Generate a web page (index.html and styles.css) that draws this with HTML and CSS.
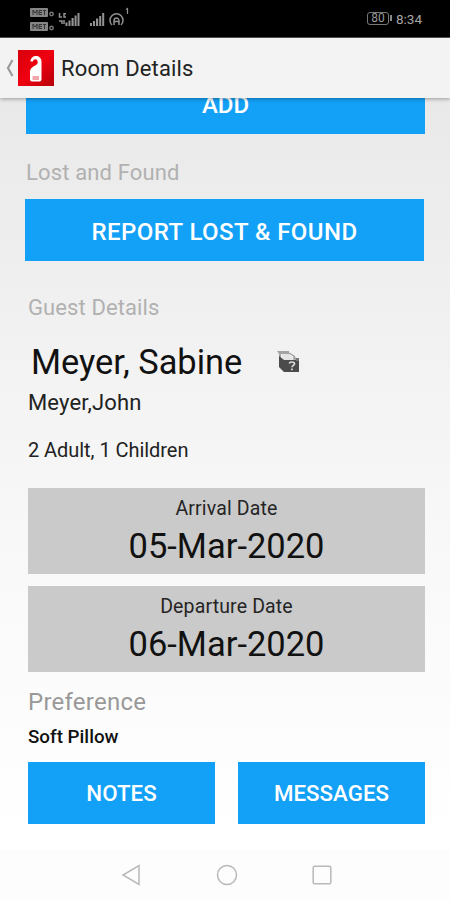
FILE: index.html
```html
<!DOCTYPE html>
<html lang="en">
<head>
<meta charset="utf-8">
<title>Room Details</title>
<link rel="stylesheet" href="styles.css">
</head>
<body>
<div class="screen">
  <div class="status">
    <svg class="signals" width="105" height="38" viewBox="0 0 105 38">
      <g fill="#858585">
        <rect x="0" y="8" width="18" height="9" rx="1"/>
        <rect x="0" y="22" width="18" height="9" rx="1"/>
      </g>
      <g fill="none" stroke="#333" stroke-width="1">
        <path d="M3 15v-5l2 3 2-3v5M12 10.500H9v4h3M9 12.500h3M13 10.500h3M14.500 10.500v4.500"/>
        <path d="M3 29v-5l2 3 2-3v5M12 24.500H9v4h3M9 26.500h3M13 24.500h3M14.500 24.500v4.500"/>
      </g>
      <g fill="none" stroke="#777" stroke-width="1.500">
        <circle cx="21.500" cy="14" r="1.700"/>
        <circle cx="21.500" cy="28" r="1.700"/>
        <path d="M29.500 13v4h2.500M36 13.700h-2v3.300h2M29 21h3v3M34 20v4" stroke="#909090"/>
      </g>
      <g fill="#929292">
        <path d="M35.500 22.500h2v3.500h-2zM38.500 20.500h2v5.500h-2zM41.500 18h2.200v8h-2.200zM44.600 15.500h2v10.500h-2zM47.500 13h2v13h-2z"/>
        <path d="M60 23h2v3h-2zM63 21h2v5h-2zM66 18.500h2.200v7.500h-2.200zM69.200 16h2v10h-2zM72.200 13h2v13h-2z"/>
      </g>
      <g fill="none" stroke="#909090" stroke-width="1.500">
        <path d="M82 25a6.500 6.500 0 1 1 9 0"/>
        <path d="M84 25v-4a2.500 3 0 0 1 5 0v4M84 21.500h5"/>
        <path d="M96 9.500l1.500-1V14" stroke-width="1.200"/>
      </g>
    </svg>
    <div class="battery">80</div>
    <div class="clock">8:34</div>
  </div>
  <header class="bar">
    <svg class="back" width="8" height="20" viewBox="0 0 8 20"><path d="M6.500 2 2 10l4.500 8" fill="none" stroke="#9b9b9b" stroke-width="2.200"/></svg>
    <svg class="logo" width="36" height="36" viewBox="0 0 36 36">
      <defs><linearGradient id="red" x1="0" y1="0" x2="1" y2="1"><stop offset="0" stop-color="#d8000b"/><stop offset=".5" stop-color="#ef0010"/><stop offset="1" stop-color="#b6000a"/></linearGradient></defs>
      <rect width="36" height="36" fill="url(#red)"/>
      <path d="M12.500 11.500C12.500 4 23.500 4 23.500 11.500V29.500q0 2-2 2h-7.500q-2 0-2-2V21q0-2.500 3-4.200c3.500-1.500 5-3 4.700-5-.5-3.300-4.400-3.300-4.700-.3z" fill="#fff"/>
      <path d="M14.500 27h6.500M14.500 29h6.500" stroke="#e05058" stroke-width="1.200"/>
    </svg>
    <h1 class="title">Room Details</h1>
  </header>
  <main class="content">
    <button class="btn add">ADD</button>
    <h2 class="label lost">Lost and Found</h2>
    <button class="btn report">REPORT LOST &amp; FOUND</button>
    <h2 class="label guest">Guest Details</h2>
    <div class="name-row">
      <span class="name">Meyer, Sabine</span>
      <svg width="23" height="22" viewBox="0 0 23 22">
        <path d="M0 0h12v3H4v5H2V3z" fill="#a4a4a4"/>
        <path d="M5 3h7l5 6H5z" fill="#e4e4e4"/>
        <path d="M12 2l5 3v4M17 5l2 4" fill="none" stroke="#999" stroke-width="1.300"/>
        <path d="M2 5l5 4h15v12H7l-5-5z" fill="#4b4b4b"/>
        <path d="M19 7h3v3h-3z" fill="#777"/>
        <path d="M12.500 12.500q0-1.500 2.500-1.500 2.500 0 2.500 1.800c0 1.700-2.500 1.500-2.500 3.500M14.900 17.500v1.700" fill="none" stroke="#ddd" stroke-width="1.700"/>
      </svg>
    </div>
    <p class="companion">Meyer,John</p>
    <p class="party">2 Adult, 1 Children</p>
    <section class="date">
      <span class="caption">Arrival Date</span>
      <span class="value">05-Mar-2020</span>
    </section>
    <section class="date">
      <span class="caption">Departure Date</span>
      <span class="value">06-Mar-2020</span>
    </section>
    <h2 class="label pref">Preference</h2>
    <p class="pillow">Soft Pillow</p>
    <div class="actions">
      <button class="btn">NOTES</button>
      <button class="btn">MESSAGES</button>
    </div>
  </main>
  <nav class="nav">
    <svg width="20" height="22" viewBox="0 0 20 22"><path d="M18 1.500v19L2 11z"/></svg>
    <svg width="22" height="22" viewBox="0 0 22 22"><circle cx="11" cy="11" r="9.500"/></svg>
    <svg width="20" height="20" viewBox="0 0 20 20"><rect x="1.200" y="1.200" width="17.600" height="17.600" rx="1.500"/></svg>
  </nav>
</div>
</body>
</html>
```
FILE: styles.css
```css
* { box-sizing: border-box; margin: 0; padding: 0; }
body { font-family: Roboto, "Liberation Sans", sans-serif; color: #111; }
.screen { width: 450px; height: 900px; display: flex; flex-direction: column; overflow: hidden; background: linear-gradient(#e9e9e9 98px, #f0f0f0 300px, #f7f7f7 500px, #fdfdfd 740px, #fff 845px); }
.status { height: 38px; flex: none; display: flex; align-items: center; background: #000; border-bottom: 1px solid #555; padding: 0 27px 0 30px; color: #999; }
.battery { position: relative; margin-left: auto; width: 22px; height: 13px; border: 1.500px solid #777; border-radius: 3px; font-size: 12px; line-height: 11px; text-align: center; }
.battery::after { content: ""; position: absolute; right: -4px; top: 2px; width: 2px; height: 6px; background: #888; }
.clock { margin-left: 7px; width: 27px; font-size: 13.500px; line-height: 38px; padding-top: 1px; white-space: nowrap; color: #a5a5a5; }
.bar { position: relative; height: 60px; flex: none; display: flex; align-items: center; background: #f3f3f3; box-shadow: 0 1px 4px rgba(0,0,0,.35); padding: 0 6px; }
.logo { margin-left: 4px; }
.title { margin-left: 7px; font-size: 22px; font-weight: 400; line-height: 60px; padding-top: 1px; color: #222; letter-spacing: .15px; }
.content { height: 752px; flex: none; padding: 0 25px 0 28px; overflow: hidden; }
.btn { display: block; height: 62px; width: 100%; border: 0; background: #13a1f7; color: #fff; font: 500 22.300px/62px Roboto, sans-serif; white-space: nowrap; }
.add { margin: -26px 0 0 -2px; width: 399px; font-size: 24px; padding-top: 2px; }
.report { margin: 11px 0 0 -3px; width: 399px; font-size: 24px; letter-spacing: .45px; padding-top: 2px; }
.label { font-weight: 400; font-size: 22px; line-height: 30px; color: #b1b1b1; white-space: nowrap; }
.lost { margin: 24px 0 0 -2px; letter-spacing: .15px; }
.guest { margin-top: 32px; letter-spacing: .1px; }
.name-row { display: flex; align-items: center; gap: 35px; height: 44px; margin: 17px 0 0 3px; }
.name { font-size: 34.400px; line-height: 44px; white-space: nowrap; }
.companion { font-size: 22px; line-height: 30px; margin-top: 4px; color: #222; letter-spacing: .15px; }
.party { font-size: 20px; line-height: 30px; margin: 17px 0 23px; color: #222; letter-spacing: -.05px; }
.date { height: 86px; margin-bottom: 12px; background: #cacaca; display: flex; flex-direction: column; align-items: center; padding-top: 8px; }
.caption { font-size: 19.500px; line-height: 26px; color: #252525; letter-spacing: .15px; }
.value { font-size: 34.500px; line-height: 44px; margin-top: 2px; }
.pref { margin-top: 15px; font-size: 24px; color: #999; letter-spacing: .25px; }
.pillow { font-size: 18.800px; font-weight: 500; line-height: 24px; margin: 8px 0 13px; }
.actions { display: grid; grid-template-columns: 187px 187px; justify-content: space-between; }
.nav { height: 50px; display: flex; align-items: center; padding: 0 118px 0 121px; justify-content: space-between; background: #fdfdfd; }
.nav svg { fill: none; stroke: #b9b9b9; stroke-width: 1.500; }
```
